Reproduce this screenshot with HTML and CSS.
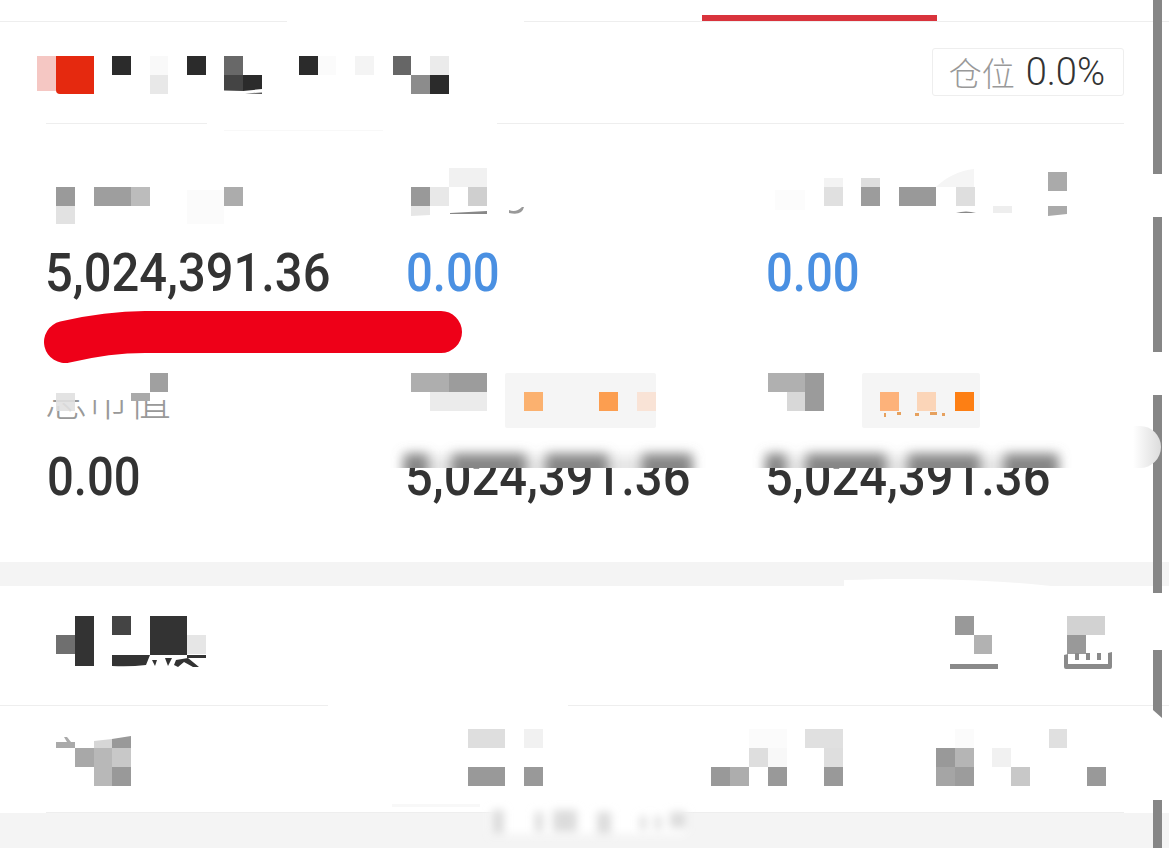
FILE: index.html
```html
<!DOCTYPE html>
<html lang="zh-CN">
<head>
<meta charset="UTF-8">
<meta name="viewport" content="width=device-width, initial-scale=1.0">
<title>仓位</title>
<link rel="stylesheet" href="styles.css">
</head>
<body>
  <div class="page">
    <div class="tabs">
      <div class="tab-active"></div>
    </div>

    <div class="summary">
      <div class="summary-head">
        <div class="position"><span class="position-label">仓位</span><span class="position-value">0.0%</span></div>
      </div>
      <div class="metrics">
        <div class="metric">
          <div class="metric-label"></div>
          <div class="metric-value long">5,024,391.36</div>
        </div>
        <div class="metric">
          <div class="metric-label"></div>
          <div class="metric-value blue">0.00</div>
        </div>
        <div class="metric">
          <div class="metric-label"></div>
          <div class="metric-value blue">0.00</div>
        </div>
        <div class="metric">
          <div class="metric-label">总市值</div>
          <div class="metric-value">0.00</div>
        </div>
        <div class="metric">
          <div class="metric-label"></div>
          <div class="metric-value long">5,024,391.36</div>
        </div>
        <div class="metric">
          <div class="metric-label"></div>
          <div class="metric-value long">5,024,391.36</div>
        </div>
      </div>
    </div>

    <div class="band"></div>

    <div class="holdings">
      <div class="holdings-head"></div>
      <div class="holdings-row"></div>
    </div>

    <div class="foot"></div>

    <!-- redaction marks painted over the page -->
    <svg class="marks" width="1169" height="848" viewBox="0 0 1169 848">
      <defs>
        <filter id="soft" x="-30%" y="-100%" width="160%" height="300%"><feGaussianBlur stdDeviation="6"/></filter>
        <filter id="softer" x="-30%" y="-100%" width="160%" height="300%"><feGaussianBlur stdDeviation="4"/></filter>
        <clipPath id="smear-clip"><rect x="380" y="430" width="700" height="38"/></clipPath>
        <linearGradient id="knob" x1="0" x2="1" y1="0" y2="0">
          <stop offset="0" stop-color="#ffffff"/>
          <stop offset="1" stop-color="#dcdcdc"/>
        </linearGradient>
      </defs>

      <!-- scrollbar-like stripe -->
      <g fill="#868686">
        <rect x="1153" y="0" width="9" height="174"/>
        <path d="M1153 217 L1162 217 L1162 352 L1153 352 Z"/>
        <rect x="1153" y="395" width="9" height="198"/>
        <path d="M1153 650 L1162 650 L1162 718 L1153 710 Z"/>
        <rect x="1153" y="800" width="9" height="48"/>
      </g>
      <path d="M1153 174 L1162 181 L1169 190 L1162 217 L1153 217 Z" fill="#fff"/>
      <path d="M1133 426 L1140 426 A21 21 0 0 1 1140 468 L1133 468 Z" fill="url(#knob)"/>

      <!-- white patches over lines -->
      <g fill="#fff">
        <rect x="287" y="20" width="237" height="3"/>
        <rect x="207" y="122" width="290" height="3"/>
        <rect x="328" y="704" width="240" height="3"/>
        <rect x="44" y="372" width="133" height="28"/>
        <path d="M844 580 C 900 578 980 578 1051 586 L 844 586 Z"/>
      </g>
      <rect x="224" y="130" width="159" height="1" fill="#f8f8f8"/>

      <!-- header title -->
      <rect x="37" y="56" width="19" height="35" fill="#f5c7c3"/>
      <path d="M56 56 H94 V94 H60 Q56 94 56 90 Z" fill="#e5290f"/>
      <g fill="#2b2b2b">
        <rect x="112" y="56" width="19" height="19"/>
        <rect x="187" y="56" width="19" height="19"/>
        <rect x="299" y="56" width="19" height="19"/>
        <rect x="430" y="75" width="19" height="19"/>
        <path d="M243 75 H262 V89 L243 91 Z"/>
      </g>
      <rect x="150" y="56" width="18" height="19" fill="#f9f9f9"/>
      <rect x="150" y="75" width="18" height="19" fill="#e8e8e8"/>
      <rect x="224" y="56" width="19" height="19" fill="#686868"/>
      <path d="M224 75 H243 V91 L224 90.500 Z" fill="#444"/>
      <path d="M245 93.500 L262 92.500 V94 Z" fill="#555"/>
      <rect x="318" y="56" width="18" height="19" fill="#fbfbfb"/>
      <rect x="355" y="56" width="19" height="19" fill="#f4f4f4"/>
      <rect x="393" y="56" width="18" height="19" fill="#666"/>
      <rect x="411" y="75" width="19" height="19" fill="#8c8c8c"/>
      <rect x="430" y="56" width="19" height="19" fill="#ebebeb"/>

      <!-- first label row -->
      <rect x="56" y="187" width="19" height="19" fill="#9a9a9a"/>
      <rect x="56" y="206" width="19" height="18" fill="#e2e2e2"/>
      <rect x="94" y="187" width="37" height="19" fill="#9e9e9e"/>
      <rect x="131" y="187" width="19" height="19" fill="#bcbcbc"/>
      <rect x="187" y="190" width="37" height="34" fill="#fbfbfb"/>
      <rect x="224" y="187" width="19" height="19" fill="#acacac"/>

      <rect x="411" y="187" width="19" height="19" fill="#999"/>
      <rect x="430" y="187" width="19" height="19" fill="#e8e8e8"/>
      <rect x="449" y="168" width="38" height="19" fill="#f1f1f1"/>
      <rect x="468" y="187" width="19" height="19" fill="#cfcfcf"/>
      <path d="M411 206 H430 V215 L411 216 Z" fill="#e6e6e6"/>
      <path d="M450 213 L487 211 V214 L450 214 Z" fill="#888"/>
      <path d="M509 210 Q516 213 522 207 L524 207 Q522 216 509 213 Z" fill="#999"/>

      <rect x="775" y="190" width="30" height="20" fill="#fcfcfc"/>
      <rect x="824" y="178" width="19" height="9" fill="#f3f3f3"/>
      <rect x="824" y="187" width="19" height="19" fill="#e0e0e0"/>
      <rect x="861" y="178" width="19" height="9" fill="#dedede"/>
      <rect x="861" y="187" width="19" height="19" fill="#9c9c9c"/>
      <rect x="899" y="187" width="37" height="19" fill="#999"/>
      <path d="M936 187 C 945 178 960 170 974 169 V187 Z" fill="#f5f5f5"/>
      <rect x="956" y="187" width="19" height="19" fill="#dedede"/>
      <rect x="993" y="206" width="19" height="7" fill="#eee"/>
      <rect x="1048" y="172" width="19" height="19" fill="#aaa"/>
      <path d="M1048 206 H1067 V214 L1048 216 Z" fill="#aaa"/>
      <path d="M956 213 Q966 210 976 213 Z" fill="#888"/>

      <!-- red marker stroke -->
      <path d="M65 342 C 95 335 120 332 145 332 L441 332" fill="none" stroke="#ee0018" stroke-width="42" stroke-linecap="round"/>

      <!-- second label row -->
      <rect x="150" y="373" width="18" height="19" fill="#a0a0a0"/>
      <rect x="131" y="393" width="19" height="8" fill="#aaa"/>
      <rect x="56" y="393" width="19" height="18" fill="#e0e0e0" opacity=".9"/>

      <rect x="411" y="373" width="38" height="19" fill="#aeaeae"/>
      <rect x="449" y="373" width="38" height="19" fill="#9c9c9c"/>
      <rect x="430" y="392" width="57" height="19" fill="#ebebeb"/>
      <rect x="505" y="373" width="151" height="55" rx="2" fill="#f5f5f5"/>
      <rect x="524" y="392" width="19" height="19" fill="#fbb16f"/>
      <rect x="599" y="392" width="19" height="19" fill="#fc9e50"/>
      <rect x="637" y="392" width="19" height="19" fill="#f9e3d6"/>

      <rect x="768" y="373" width="37" height="19" fill="#b0b0b0"/>
      <rect x="805" y="373" width="19" height="38" fill="#9b9b9b"/>
      <rect x="787" y="392" width="18" height="19" fill="#d8d8d8"/>
      <rect x="862" y="373" width="118" height="55" rx="2" fill="#f5f5f5"/>
      <rect x="880" y="392" width="19" height="19" fill="#fdb27a"/>
      <rect x="917" y="392" width="19" height="19" fill="#fbd5b8"/>
      <rect x="955" y="392" width="19" height="19" fill="#fd7f14"/>
      <g fill="#e6a15e">
        <rect x="884" y="413" width="2" height="4"/>
        <rect x="897" y="412" width="4" height="3"/>
        <rect x="915" y="413" width="4" height="3"/>
        <rect x="930" y="412" width="7" height="3"/>
        <rect x="942" y="413" width="3" height="3"/>
      </g>

      <!-- blurred strip over the two totals -->
      <rect x="392" y="434" width="314" height="34" fill="#fff"/>
      <rect x="752" y="434" width="318" height="34" fill="#fff"/>
      <g clip-path="url(#smear-clip)">
        <g filter="url(#soft)" fill="#e6e6e6">
          <rect x="404" y="456" width="288" height="24"/>
          <rect x="766" y="456" width="292" height="24"/>
        </g>
        <g filter="url(#soft)" fill="#858585">
          <rect x="404" y="454" width="24" height="26"/>
          <rect x="452" y="454" width="74" height="26"/>
          <rect x="546" y="454" width="62" height="26"/>
          <rect x="642" y="454" width="50" height="26"/>
          <rect x="766" y="454" width="20" height="26"/>
          <rect x="806" y="454" width="80" height="26"/>
          <rect x="908" y="454" width="72" height="26"/>
          <rect x="1004" y="454" width="54" height="26"/>
        </g>
      </g>

      <!-- holdings title and icons -->
      <g fill="#333">
        <rect x="75" y="616" width="19" height="50"/>
        <rect x="150" y="616" width="37" height="39"/>
        <path d="M112 655 H150 L146 665 Q130 667 112 666 Z"/>
        <path d="M187 655 H206 V658 L187 658 Z"/>
        <path d="M152 660 L157 660 L155 666 Z M165 658 L172 658 L168 666 Z M176 660 L188 658 L199 667 L193 667 L184 662 L178 667 L174 665 Z"/>
      </g>
      <rect x="56" y="635" width="19" height="19" fill="#6f6f6f"/>
      <rect x="112" y="616" width="19" height="19" fill="#444"/>
      <rect x="187" y="635" width="19" height="19" fill="#e6e6e6"/>

      <rect x="955" y="616" width="19" height="19" fill="#999"/>
      <rect x="974" y="635" width="18" height="19" fill="#b2b2b2"/>
      <rect x="950" y="664" width="48" height="5" fill="#8a8a8a"/>
      <rect x="1067" y="616" width="38" height="19" fill="#d2d2d2"/>
      <rect x="1067" y="635" width="19" height="19" fill="#999"/>
      <g fill="#8a8a8a">
        <path d="M1064 655 L1068 654 V664 H1108 V653 L1112 652 V667 Q1112 669 1110 669 H1066 Q1064 669 1064 667 Z"/>
        <rect x="1075" y="653" width="4" height="7"/>
        <rect x="1086" y="653" width="4" height="7"/>
        <rect x="1097" y="653" width="4" height="7"/>
      </g>

      <!-- holdings row -->
      <rect x="56" y="742" width="19" height="6" fill="#aaa"/>
      <path d="M64 737 L67 737 L71 742 L67 742 Z" fill="#aaa"/>
      <rect x="75" y="748" width="19" height="19" fill="#a8a8a8"/>
      <path d="M94 741 L112 739 V748 H94 Z" fill="#d6d6d6"/>
      <rect x="94" y="748" width="18" height="38" fill="#b8b8b8"/>
      <path d="M112 739 L131 736 V748 H112 Z" fill="#999"/>
      <rect x="112" y="748" width="19" height="19" fill="#c8c8c8"/>
      <rect x="112" y="767" width="19" height="19" fill="#999"/>

      <rect x="468" y="729" width="37" height="19" fill="#dedede"/>
      <rect x="524" y="729" width="19" height="19" fill="#f1f1f1"/>
      <rect x="468" y="767" width="37" height="19" fill="#999"/>
      <rect x="524" y="767" width="19" height="19" fill="#999"/>

      <rect x="749" y="729" width="38" height="19" fill="#fbfbfb"/>
      <rect x="711" y="767" width="19" height="19" fill="#999"/>
      <rect x="730" y="767" width="19" height="19" fill="#adadad"/>
      <rect x="749" y="748" width="19" height="19" fill="#dedede"/>
      <rect x="768" y="748" width="19" height="19" fill="#f8f8f8"/>
      <rect x="768" y="767" width="19" height="19" fill="#999"/>
      <rect x="805" y="729" width="38" height="19" fill="#e0e0e0"/>
      <rect x="824" y="748" width="19" height="19" fill="#dedede"/>
      <rect x="824" y="767" width="19" height="19" fill="#999"/>

      <rect x="955" y="729" width="19" height="19" fill="#fbfbfb"/>
      <rect x="936" y="748" width="19" height="19" fill="#999"/>
      <rect x="955" y="748" width="19" height="19" fill="#b5b5b5"/>
      <rect x="936" y="767" width="19" height="19" fill="#a5a5a5"/>
      <rect x="955" y="767" width="19" height="19" fill="#9c9c9c"/>
      <rect x="992" y="748" width="19" height="19" fill="#f1f1f1"/>
      <rect x="1011" y="767" width="19" height="19" fill="#c8c8c8"/>
      <rect x="1049" y="729" width="18" height="19" fill="#e0e0e0"/>
      <rect x="1087" y="767" width="19" height="19" fill="#999"/>

      <!-- blurred patch on the bottom edge -->
      <rect x="490" y="802" width="195" height="32" fill="#fff" filter="url(#softer)"/>
      <g fill="#dcdcdc" filter="url(#softer)">
        <rect x="492" y="810" width="12" height="24"/>
        <rect x="535" y="812" width="8" height="20"/>
        <rect x="553" y="810" width="24" height="22"/>
        <rect x="597" y="812" width="14" height="22"/>
        <rect x="640" y="816" width="6" height="14"/>
        <rect x="655" y="816" width="6" height="14"/>
        <rect x="670" y="812" width="16" height="16"/>
      </g>
      <rect x="392" y="804" width="88" height="3" fill="#f8f8f8"/>
    </svg>
  </div>
</body>
</html>
```

FILE: styles.css
```css
body {
  margin: 0;
  background-color: #ffffff;
  font-family: "Noto Sans CJK SC", "Noto Sans", sans-serif;
}

.page {
  position: relative;
  width: 1169px;
  height: 848px;
  overflow: hidden;
  display: flex;
  flex-direction: column;
  background-color: #ffffff;
}

.tabs {
  height: 21px;
  border-bottom: 1px solid #eeeeee;
  display: flex;
  align-items: flex-end;
  flex-shrink: 0;
}

.tab-active {
  width: 235px;
  height: 6px;
  margin-left: 702px;
  background-color: #d9333c;
}

.summary {
  height: 540px;
  flex-shrink: 0;
}

.summary-head {
  height: 101px;
  margin: 0 45px 0 46px;
  border-bottom: 1px solid #eeeeee;
  display: flex;
  align-items: center;
  justify-content: flex-end;
}

.position {
  height: 46px;
  margin-bottom: 2px;
  padding: 0 18px 0 16px;
  border: 1px solid #eeeeee;
  border-radius: 3px;
  display: flex;
  align-items: center;
  gap: 11px;
}

.position-label {
  font-size: 33px;
  font-weight: 300;
  color: #999999;
}

.position-value {
  font-family: Roboto, sans-serif;
  font-size: 38px;
  font-weight: 300;
  color: #333333;
}

.metrics {
  padding: 54px 0 0 47px;
  display: grid;
  grid-template-columns: repeat(3, 360px);
  row-gap: 79px;
}

.metric-label {
  height: 44px;
  margin: 0 0 21px -2px;
  font-size: 42px;
  line-height: 32px;
  font-weight: 300;
  color: #999999;
}

.metric-value {
  height: 60px;
  font-family: Roboto, sans-serif;
  font-size: 54px;
  font-weight: 500;
  line-height: 60px;
  color: #333333;
  transform: scaleX(0.875);
  transform-origin: left center;
}

.long {
  margin-left: -2px;
  transform: scaleX(0.905);
}

.blue {
  margin-left: -1px;
  color: #4a90e2;
}

.band {
  height: 24px;
  background-color: #f4f4f4;
  flex-shrink: 0;
}

.holdings-head {
  height: 119px;
  border-bottom: 1px solid #eeeeee;
}

.holdings-row {
  height: 106px;
  margin: 0 45px 0 46px;
  border-bottom: 1px solid #eeeeee;
}

.foot {
  flex-grow: 1;
  background-color: #f4f4f4;
}

.marks {
  position: absolute;
  top: 0;
  left: 0;
}
```
